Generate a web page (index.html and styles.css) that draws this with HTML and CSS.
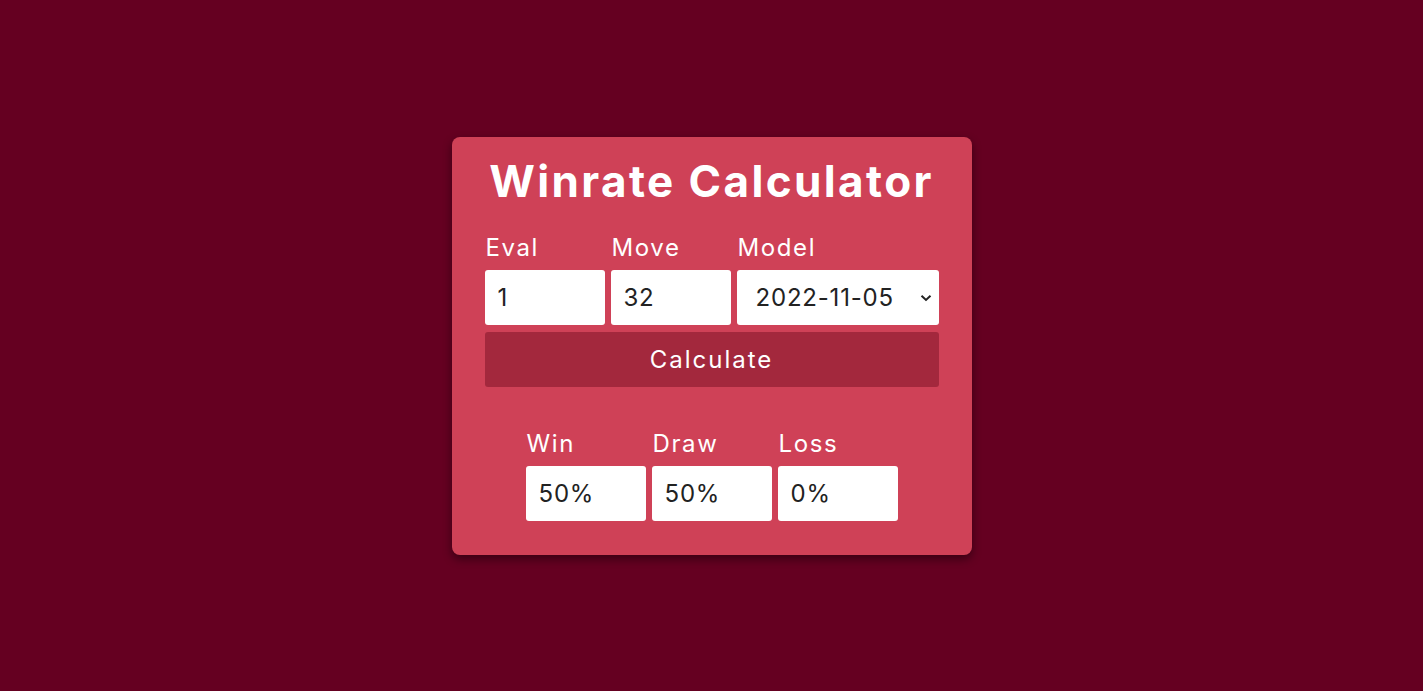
FILE: index.html
```html
<!DOCTYPE html>
<html lang="en">
<head>
<meta charset="utf-8">
<title>Winrate Calculator</title>
<link rel="stylesheet" href="styles.css">
</head>
<body>
<main class="page">
  <section class="card">
    <h1 class="title">Winrate Calculator</h1>
    <div class="form-grid">
      <label class="label" for="eval">Eval</label>
      <label class="label" for="move">Move</label>
      <label class="label" for="model">Model</label>
      <input class="field" id="eval" type="text" value="1">
      <input class="field" id="move" type="text" value="32">
      <div class="select-wrap">
        <select class="field select" id="model">
          <option>2022-11-05</option>
        </select>
        <svg class="chevron" width="12" height="8" viewBox="0 0 12 8"><path d="M1.5 1.8 L6 6 L10.5 1.8" fill="none" stroke="#222" stroke-width="2"/></svg>
      </div>
      <button class="calc" type="button">Calculate</button>
    </div>
    <div class="result-grid">
      <span class="label">Win</span>
      <span class="label">Draw</span>
      <span class="label">Loss</span>
      <input class="field" type="text" value="50%" readonly>
      <input class="field" type="text" value="50%" readonly>
      <input class="field" type="text" value="0%" readonly>
    </div>
  </section>
</main>
</body>
</html>
```
FILE: styles.css
```css
html, body {
  margin: 0;
  padding: 0;
  height: 100%;
}
body {
  background: #650021;
  font-family: Inter, "Open Sans", "Liberation Sans", sans-serif;
  color: #fff;
}
.page {
  display: flex;
  justify-content: center;
  padding-top: 137px;
}
.card {
  width: 454px;
  background: #cf4157;
  border-radius: 8px;
  padding: 17px 33px 34px;
  box-shadow: 0 4px 10px rgba(0, 0, 0, 0.45);
}
.title {
  margin: 0 0 25px;
  text-align: center;
  font-size: 44px;
  line-height: 54px;
  font-weight: 700;
  letter-spacing: 2.4px;
}
.form-grid {
  display: grid;
  grid-template-columns: 120px 120px 202px;
  column-gap: 6px;
  row-gap: 0;
}
.label {
  font-size: 24px;
  line-height: 29px;
  margin-bottom: 8px;
  letter-spacing: 1.6px;
  padding-left: 1px;
}
.field {
  box-sizing: border-box;
  height: 55px;
  width: 100%;
  border: none;
  border-radius: 3px;
  background: #fff;
  color: #222;
  font-family: inherit;
  font-size: 24px;
  letter-spacing: 0.8px;
  padding: 0 12px 0 13px;
  outline: none;
}
.select-wrap {
  position: relative;
}
.select {
  appearance: none;
  -webkit-appearance: none;
  padding-left: 19px;
}
.chevron {
  position: absolute;
  right: 7px;
  top: 24px;
  pointer-events: none;
}
.calc {
  grid-column: 1 / -1;
  margin-top: 7px;
  height: 55px;
  border: none;
  border-radius: 3px;
  background: #a3283d;
  color: #fff;
  font-family: inherit;
  font-size: 24px;
  letter-spacing: 2px;
}
.result-grid {
  display: grid;
  grid-template-columns: repeat(3, 120px);
  column-gap: 6px;
  justify-content: center;
  margin-top: 42px;
}
```
